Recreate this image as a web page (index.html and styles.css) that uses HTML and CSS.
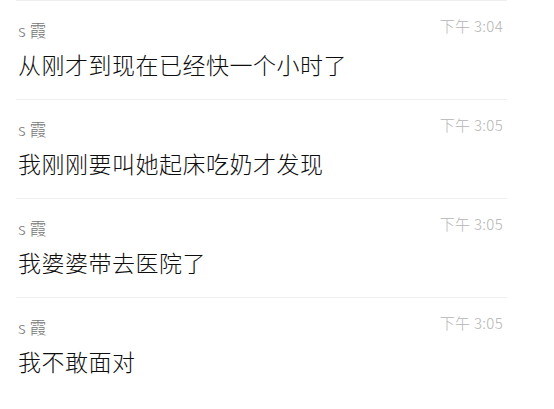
FILE: index.html
```html
<!DOCTYPE html>
<html lang="zh">
<head>
  <meta charset="UTF-8" />
  <title>聊天记录</title>
  <link rel="stylesheet" href="styles.css">
</head>
<body>
  <ul class="mensagens">
    <li class="msg">
      <div class="topo"><span class="nome">s 霞</span><span class="hora">下午 3:04</span></div>
      <p class="texto">从刚才到现在已经快一个小时了</p>
    </li>
    <li class="msg">
      <div class="topo"><span class="nome">s 霞</span><span class="hora">下午 3:05</span></div>
      <p class="texto">我刚刚要叫她起床吃奶才发现</p>
    </li>
    <li class="msg">
      <div class="topo"><span class="nome">s 霞</span><span class="hora">下午 3:05</span></div>
      <p class="texto">我婆婆带去医院了</p>
    </li>
    <li class="msg">
      <div class="topo"><span class="nome">s 霞</span><span class="hora">下午 3:05</span></div>
      <p class="texto">我不敢面对</p>
    </li>
  </ul>
</body>
</html>
```

FILE: styles.css
```css
body {
  margin: 0;
  background: #fff;
  font-family: "Noto Sans CJK SC", "Noto Sans", sans-serif;
  width: 554px;
  height: 409px;
  overflow: hidden;
}

.mensagens {
  list-style: none;
  margin: 0;
  padding: 0 47px 0 16px;
}

.msg {
  border-top: 1px solid #eeeeee;
  height: 98px;
  padding: 0 2px;
}

.topo {
  display: flex;
  justify-content: space-between;
  align-items: flex-start;
  padding-top: 17px;
  height: 24px;
}

.nome {
  font-size: 17px;
  font-weight: 300;
  line-height: 24px;
  color: #777;
}

.hora {
  font-size: 15px;
  font-weight: 300;
  line-height: 20px;
  color: #b4b4b4;
  margin-top: -2px;
  margin-right: 2px;
  letter-spacing: 0.3px;
}

.texto {
  margin: 6px 0 0;
  font-size: 23px;
  font-weight: 300;
  line-height: 32px;
  letter-spacing: 0.5px;
  color: #0d0d0d;
}
```
